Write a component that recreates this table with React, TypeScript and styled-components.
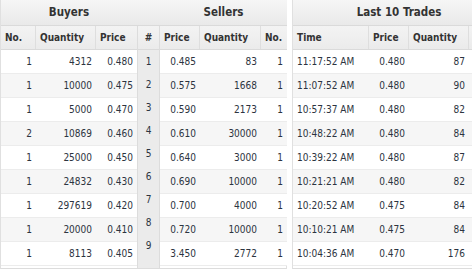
import React, { FC } from 'react'
import styled, { createGlobalStyle } from 'styled-components'

const GlobalStyle = createGlobalStyle`
  html, body {
    margin: 0;
    padding: 0;
    background: #fff;
    overflow: hidden;
  }

  body {
    font-family: Tahoma, "DejaVu Sans Condensed", "Liberation Sans", sans-serif;
    font-size: 10px;
    color: #333;
  }
`

type Align = 'left' | 'right' | 'center'

interface ColumnType {
  title: string;
  width: number;
  align: Align;
}

const buyerColumns: ColumnType[] = [
  { title: 'No.', width: 35, align: 'right' },
  { title: 'Quantity', width: 60, align: 'right' },
  { title: 'Price', width: 41, align: 'right' },
]

const sellerColumns: ColumnType[] = [
  { title: 'Price', width: 40, align: 'right' },
  { title: 'Quantity', width: 61, align: 'right' },
  { title: 'No.', width: 26, align: 'right' },
]

const tradeColumns: ColumnType[] = [
  { title: 'Time', width: 76, align: 'left' },
  { title: 'Price', width: 40, align: 'right' },
  { title: 'Quantity', width: 60, align: 'right' },
  { title: '', width: 36, align: 'right' },
]

const buyers = [
  ['1', '4312', '0.480'],
  ['1', '10000', '0.475'],
  ['1', '5000', '0.470'],
  ['2', '10869', '0.460'],
  ['1', '25000', '0.450'],
  ['1', '24832', '0.430'],
  ['1', '297619', '0.420'],
  ['1', '20000', '0.410'],
  ['1', '8113', '0.405'],
]

const sellers = [
  ['0.485', '83', '1'],
  ['0.575', '1668', '1'],
  ['0.590', '2173', '1'],
  ['0.610', '30000', '1'],
  ['0.640', '3000', '1'],
  ['0.690', '10000', '1'],
  ['0.700', '4000', '1'],
  ['0.720', '10000', '1'],
  ['3.450', '2772', '1'],
]

const trades = [
  ['11:17:52 AM', '0.480', '87', ''],
  ['11:07:52 AM', '0.480', '90', ''],
  ['10:57:37 AM', '0.480', '82', ''],
  ['10:48:22 AM', '0.480', '84', ''],
  ['10:39:22 AM', '0.480', '87', ''],
  ['10:21:21 AM', '0.480', '82', ''],
  ['10:20:52 AM', '0.475', '84', ''],
  ['10:10:21 AM', '0.475', '84', ''],
  ['10:04:36 AM', '0.470', '176', ''],
]

const Page = styled.div`
  display: flex;
  gap: 5px;
  width: 472px;
  height: 269px;
  overflow: hidden;
`

const Panel = styled.div<{ $width: number }>`
  display: flex;
  flex-shrink: 0;
  width: ${p => p.$width}px;
  height: 269px;
  border-left: 1px solid #e0e0e0;
  border-right: 1px solid #e0e0e0;
  border-bottom: 1px solid #dcdcdc;
  box-sizing: border-box;
`

const Table = styled.div`
  display: flex;
  flex-direction: column;
`

const TitleBar = styled.div`
  height: 25px;
  line-height: 25px;
  text-align: center;
  font-weight: bold;
  font-size: 11.5px;
  color: #333;
  background: linear-gradient(#f6f6f6, #e9e9e9);
  border-bottom: 1px solid #dadada;
`

const Row = styled.div<{ $striped?: boolean }>`
  display: flex;
  height: 24px;
  background: ${p => (p.$striped ? '#f6f6f6' : '#fff')};
  border-bottom: 1px solid #ececec;
  box-sizing: border-box;
`

const HeadRow = styled(Row)`
  background: linear-gradient(#f3f3f3, #ebebeb);
  border-bottom: 1px solid #dadada;
`

const Cell = styled.div<{ $width: number; $align: Align }>`
  width: ${p => p.$width}px;
  flex-shrink: 0;
  padding: 0 4px;
  box-sizing: border-box;
  line-height: 23px;
  text-align: ${p => p.$align};
  white-space: nowrap;
  color: #2c3440;
`

const HeadCell = styled(Cell)`
  text-align: left;
  font-weight: bold;
  color: #333;
  border-right: 1px solid #dedede;

  &:last-child {
    border-right: none;
  }
`

const IndexColumn = styled.div`
  display: flex;
  flex-direction: column;
  width: 23px;
  flex-shrink: 0;
`

const IndexBody = styled.div`
  flex: 1;
  background: #ebebeb;
  border-left: 1px solid #dcdcdc;
  border-right: 1px solid #dcdcdc;
`

const IndexCell = styled.div`
  height: 23px;
  line-height: 23px;
  text-align: center;
  color: #2c3440;
`

const IndexHead = styled(IndexCell)`
  height: 24px;
  font-weight: bold;
  color: #333;
  background: linear-gradient(#f3f3f3, #ebebeb);
  border-bottom: 1px solid #dadada;
  box-sizing: border-box;
`

interface DataTableType {
  title: string;
  columns: ColumnType[];
  rows: string[][];
}

const DataTable: FC<DataTableType> = ({ title, columns, rows }) => (
  <Table>
    <TitleBar>{title}</TitleBar>
    <HeadRow>
      {columns.map((c, i) => (
        <HeadCell key={i} $width={c.width} $align="left">{c.title}</HeadCell>
      ))}
    </HeadRow>
    {rows.map((row, r) => (
      <Row key={r} $striped={r % 2 === 1}>
        {row.map((value, i) => (
          <Cell key={i} $width={columns[i].width} $align={columns[i].align}>{value}</Cell>
        ))}
      </Row>
    ))}
  </Table>
)

const App: FC = () => (
  <Page>
    <GlobalStyle />
    <Panel $width={287}>
      <DataTable title="Buyers" columns={buyerColumns} rows={buyers} />
      <IndexColumn>
        <TitleBar>&nbsp;</TitleBar>
        <IndexBody>
          <IndexHead>#</IndexHead>
          {buyers.map((_, i) => (
            <IndexCell key={i}>{i + 1}</IndexCell>
          ))}
        </IndexBody>
      </IndexColumn>
      <DataTable title="Sellers" columns={sellerColumns} rows={sellers} />
    </Panel>
    <Panel $width={214}>
      <DataTable title="Last 10 Trades" columns={tradeColumns} rows={trades} />
    </Panel>
  </Page>
)

export default App
